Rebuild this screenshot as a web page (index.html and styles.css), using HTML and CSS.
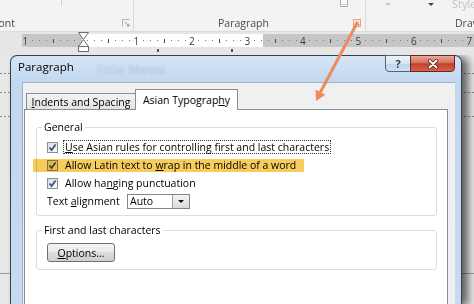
FILE: index.html
```html
<!DOCTYPE html>
<html lang="en">
<head>
    <meta charset="UTF-8">
    <meta name="viewport" content="width=device-width, initial-scale=1.0">
    <title>Paragraph - Asian Typography</title>
    <link rel="stylesheet" href="styles.css">
</head>
<body>
<div class="screen">
    <!-- ribbon strip, only the group labels are visible -->
    <div class="ribbon">
        <div class="group group-font">
            <div class="group-top"><span class="stub"></span></div>
            <div class="group-label">
                <span class="label-text">Font</span>
                <svg class="launcher" width="8" height="8" viewBox="0 0 8 8">
                    <path d="M0.5 7.5V0.5H7.5" fill="none" stroke="#b5b5b5"/>
                    <path d="M3 3L7 7M7 4.5V7H4.5" fill="none" stroke="#9a9a9a"/>
                </svg>
            </div>
        </div>
        <div class="group group-para">
            <div class="group-top">
                <svg class="mini-icon" width="8" height="7" viewBox="0 0 8 7">
                    <path d="M0.5 0V6.5H7.5V0" fill="#fafafa" stroke="#a8a8a8"/>
                    <path d="M2 4.5H6" stroke="#c4c4c4"/>
                </svg>
            </div>
            <div class="group-label">
                <span class="label-text">Paragraph</span>
                <svg class="launcher hot" width="8" height="8" viewBox="0 0 8 8">
                    <rect x="0.5" y="0.5" width="7" height="7" fill="#f7e2d6" stroke="#e9a284"/>
                    <path d="M3 3L6.5 6.5" stroke="#b56b4e"/>
                </svg>
            </div>
        </div>
        <div class="group group-styles">
            <div class="group-top">
                <span class="drop faded"></span>
                <span class="drop"></span>
                <span class="styles-word">Styles</span>
            </div>
            <div class="group-label"><span class="label-text">Drawing</span></div>
        </div>
    </div>

    <!-- horizontal ruler -->
    <div class="ruler-row">
        <div class="ruler">
            <span class="n">1</span><span></span><span></span><span></span><span class="t"></span><span></span><span></span><span></span>
            <span class="z"></span><span></span><span></span><span></span><span class="t"></span><span></span><span></span><span></span>
            <span class="n">1</span><span></span><span></span><span></span><span class="t"></span><span></span><span></span><span></span>
            <span class="n">2</span><span></span><span></span><span></span><span class="t"></span><span></span><span></span><span></span>
            <span class="n">3</span><span></span><span></span><span></span><span class="t"></span><span></span><span></span><span></span>
            <span class="n">4</span><span></span><span></span><span></span><span class="t"></span><span></span><span></span><span></span>
            <span class="n">5</span><span></span><span></span><span></span><span class="t"></span><span></span><span></span><span></span>
            <span class="n">6</span><span></span><span></span><span></span><span class="t"></span><span></span><span></span><span></span>
            <span class="n">7</span><span></span>
        </div>
        <svg class="indent-marker" width="11" height="21" viewBox="0 0 11 21">
            <path d="M0.5 0.5H10.5L5.5 7.5Z" fill="#fff" stroke="#6d6d6d"/>
            <path d="M5.5 7.5L10.5 14.5H0.5Z" fill="#fff" stroke="#6d6d6d"/>
            <rect x="0.5" y="14.5" width="10" height="5" fill="#fff" stroke="#6d6d6d"/>
        </svg>
        <span class="col-mark first"></span>
        <span class="col-mark second"></span>
    </div>

    <!-- document area with the dialog on top -->
    <div class="workspace">
        <div class="dialog">
            <div class="titlebar">
                <span class="title">Paragraph</span>
                <span class="ghost">Title Mews</span>
                <div class="caption">
                    <span class="cap-btn help">?</span>
                    <span class="cap-btn close">
                        <svg width="12" height="10" viewBox="0 0 12 10">
                            <path d="M2.5 1.5L9.5 8.5M9.5 1.5L2.5 8.5" stroke="#5a2218" stroke-width="3.4" stroke-linecap="round"/>
                            <path d="M2.5 1.5L9.5 8.5M9.5 1.5L2.5 8.5" stroke="#fff" stroke-width="1.8" stroke-linecap="round"/>
                        </svg>
                    </span>
                </div>
            </div>

            <div class="client">
                <div class="tabs">
                    <span class="tab"><u>I</u>ndents and Spacing</span>
                    <span class="tab active">Asian Typograp<u>h</u>y</span>
                </div>

                <div class="tab-panel">
                    <fieldset class="group-box">
                        <legend>General</legend>
                        <div class="row">
                            <span class="check"><svg width="9" height="9" viewBox="0 0 9 9"><path d="M1.5 4.5L3.6 7L7.6 1.5" fill="none" stroke="#3b4f86" stroke-width="1.7"/></svg></span>
                            <span class="caption-text focused"><u>U</u>se Asian rules for controlling first and last characters</span>
                        </div>
                        <div class="row marked">
                            <span class="check"><svg width="9" height="9" viewBox="0 0 9 9"><path d="M1.5 4.5L3.6 7L7.6 1.5" fill="none" stroke="#3b4f86" stroke-width="1.7"/></svg></span>
                            <span class="caption-text">Allow Latin text to <u>w</u>rap in the middle of a word</span>
                        </div>
                        <div class="row">
                            <span class="check"><svg width="9" height="9" viewBox="0 0 9 9"><path d="M1.5 4.5L3.6 7L7.6 1.5" fill="none" stroke="#3b4f86" stroke-width="1.7"/></svg></span>
                            <span class="caption-text">Allow ha<u>n</u>ging punctuation</span>
                        </div>
                        <div class="row">
                            <span class="field-label">Text <u>a</u>lignment</span>
                            <span class="combo">
                                <span class="combo-value">Auto</span>
                                <span class="combo-btn"></span>
                            </span>
                        </div>
                    </fieldset>

                    <fieldset class="group-box second">
                        <legend>First and last characters</legend>
                        <span class="push-btn"><u>O</u>ptions...</span>
                    </fieldset>
                </div>
            </div>
        </div>
    </div>

    <!-- annotation arrow pointing from the launcher to the dialog -->
    <svg class="pointer-arrow" width="474" height="304" viewBox="0 0 474 304">
        <path d="M357 23L320.5 92" stroke="#ee8a60" stroke-width="3" stroke-linecap="round"/>
        <path d="M316 101L315.6 89.6L325.4 94.8Z" fill="#ee8a60"/>
    </svg>
</div>
</body>
</html>
```

FILE: styles.css
```css
* {
    margin: 0;
    padding: 0;
    box-sizing: border-box;
}

body {
    width: 474px;
    height: 304px;
    overflow: hidden;
    background-color: #e7e7e7;
    font-family: "Open Sans", "Noto Sans", sans-serif;
    font-size: 10.5px;
    color: #000;
}

.screen {
    position: relative;
    width: 474px;
    height: 304px;
    display: flex;
    flex-direction: column;
    overflow: hidden;
}

/* ribbon */
.ribbon {
    display: flex;
    height: 32px;
    flex-shrink: 0;
    background-color: #f3f3f3;
    border-bottom: 1px solid #dcdcdc;
}

.group {
    flex-shrink: 0;
    display: flex;
    flex-direction: column;
    border-right: 1px solid #d9d9d9;
}

.group-font {
    width: 134px;
}

.group-para {
    width: 232px;
}

.group-styles {
    flex: 1;
    min-width: 0;
    overflow: hidden;
    border-right: none;
}

.group-top {
    height: 14px;
    display: flex;
    align-items: flex-start;
}

.group-label {
    height: 17px;
    display: flex;
    align-items: center;
    color: #4a4a4a;
    font-size: 10.5px;
    white-space: nowrap;
}

.group-font .label-text {
    flex: 1;
    margin-left: -7px;
}

.group-para .label-text {
    flex: 1;
    text-align: center;
}

.group-styles .group-label {
    padding-left: 89px;
}

.launcher {
    margin-right: 3px;
    flex-shrink: 0;
}

.launcher.hot {
    margin-right: 4px;
}

.stub {
    width: 1px;
    height: 6px;
    margin-left: 61px;
    background-color: #cfcfcf;
}

.mini-icon {
    margin-left: auto;
    margin-right: 17px;
}

.drop {
    flex-shrink: 0;
    width: 0;
    height: 0;
    margin-top: 3px;
    border-left: 3px solid transparent;
    border-right: 3px solid transparent;
    border-top: 3px solid #444;
}

.drop.faded {
    margin-left: 19px;
    border-top-color: #c8c8c8;
}

.group-styles .drop:not(.faded) {
    margin-left: 37px;
}

.styles-word {
    flex-shrink: 0;
    margin-left: 18px;
    margin-top: -4px;
    color: #c2c2c2;
    font-size: 11px;
    white-space: nowrap;
}

/* ruler */
.ruler-row {
    position: relative;
    height: 23px;
    flex-shrink: 0;
    padding: 2px 0 0 22px;
    background-color: #e6e6e6;
}

.ruler {
    height: 13px;
    display: flex;
    overflow: hidden;
    background: linear-gradient(to right, #c6c6c6 60px, #fff 60px, #fff 241px, #c6c6c6 241px);
}

.ruler span {
    flex: 0 0 6.94px;
    display: flex;
    align-items: center;
    justify-content: center;
    font-size: 10px;
    color: #3c3c3c;
}

.ruler span::before {
    content: "";
    width: 1px;
    height: 1px;
    background-color: #7a7a7a;
}

.ruler .n::before,
.ruler .z::before {
    display: none;
}

.ruler .t::before {
    height: 4px;
    background-color: #4a4a4a;
}

.indent-marker {
    position: absolute;
    left: 78px;
    top: 0;
}

.col-mark {
    position: absolute;
    top: 17px;
    width: 2px;
    height: 3px;
    background-color: #555;
}

.col-mark.first {
    left: 157px;
}

.col-mark.second {
    left: 231px;
}

/* document area, faint table gridlines show beside the dialog */
.workspace {
    flex: 1;
    display: flex;
    padding-left: 10px;
    background-color: #e8e8e8;
    background-image:
        repeating-linear-gradient(to right, #8a8a8a 0 2px, transparent 2px 4px),
        repeating-linear-gradient(to right, #8a8a8a 0 2px, transparent 2px 4px),
        repeating-linear-gradient(to right, #8a8a8a 0 2px, transparent 2px 4px),
        linear-gradient(#9a9a9a, #9a9a9a);
    background-size: 100% 1px;
    background-repeat: no-repeat;
    background-position: 0 18px, 0 37px, 0 61px, 0 218px;
}

/* dialog window */
.dialog {
    width: 452px;
    flex-shrink: 0;
    display: flex;
    flex-direction: column;
    border: 1px solid #34404e;
    border-bottom: none;
    border-radius: 7px 7px 0 0;
    background: linear-gradient(#d5e5f6, #c2d8ef 26px, #c6daf0);
    box-shadow: 6px 2px 9px rgba(0, 0, 0, 0.6);
}

.titlebar {
    height: 26px;
    display: flex;
    align-items: flex-start;
    padding: 0 6px 0 7px;
}

.title {
    margin-top: 3px;
    line-height: 16px;
    font-size: 11.5px;
}

.ghost {
    margin: 5px 0 0 22px;
    line-height: 16px;
    font-size: 13px;
    font-weight: bold;
    color: rgba(80, 110, 150, 0.16);
    filter: blur(1.4px);
}

.caption {
    margin-left: auto;
    margin-top: -1px;
    height: 17px;
    display: flex;
}

.cap-btn {
    height: 17px;
    display: flex;
    align-items: center;
    justify-content: center;
    border: 1px solid #52647b;
}

.help {
    width: 26px;
    border-radius: 0 0 0 4px;
    background: linear-gradient(#eef3f9, #d9e5f1 50%, #c3d3e6 50%, #d0e0f1);
    font-size: 11px;
    font-weight: bold;
    color: #2e3d52;
}

.close {
    width: 45px;
    margin-left: -1px;
    border-color: #5e2a22;
    border-radius: 0 0 4px 0;
    background: linear-gradient(#eaa898, #d1735f 45%, #c0412b 52%, #d6604a);
}

.client {
    flex: 1;
    display: flex;
    flex-direction: column;
    margin: 0 6px 0 11px;
    padding: 6px 7px 0 1px;
    background-color: #f0f0f0;
    border-top: 1px solid #9fb1c7;
    border-left: 1px solid #9fb1c7;
}

/* tabs */
.tabs {
    height: 20px;
    display: flex;
    align-items: flex-end;
    padding-left: 2px;
}

.tab {
    width: 110px;
    height: 16px;
    display: flex;
    align-items: center;
    justify-content: center;
    border: 1px solid #898c95;
    border-bottom: none;
    background: linear-gradient(#f3f3f3, #e3e3e3);
    white-space: nowrap;
}

.tab.active {
    position: relative;
    z-index: 1;
    width: 103px;
    height: 21px;
    margin-left: -1px;
    margin-bottom: -1px;
    background: #fff;
}

.tab-panel {
    flex: 1;
    padding: 10px 10px 0 11px;
    background-color: #fff;
    border: 1px solid #898c95;
    border-bottom: none;
}

/* group boxes */
.group-box {
    border: 1px solid #d7dfe5;
    border-radius: 3px;
    padding: 4px 10px 5px 10px;
}

.group-box legend {
    margin-left: -5px;
    padding: 0 2px;
    line-height: 14px;
}

.group-box.second {
    margin-top: 7px;
    padding-top: 6px;
    padding-bottom: 7px;
}

.row {
    position: relative;
    height: 18px;
    display: flex;
    align-items: center;
    white-space: nowrap;
}

.check {
    width: 11px;
    height: 11px;
    flex-shrink: 0;
    display: flex;
    align-items: center;
    justify-content: center;
    margin-right: 5px;
    border: 1px solid #8e8f8f;
    background: linear-gradient(135deg, #d9dde2, #f7f8f9);
}

.caption-text {
    padding: 0 1px;
    line-height: 12px;
    border: 1px dotted transparent;
}

.caption-text.focused {
    border-color: #333;
}

/* highlighter mark over the second option */
.row.marked::after {
    content: "";
    position: absolute;
    left: -14px;
    top: 3px;
    width: 271px;
    height: 13px;
    background-color: #f6cd5c;
    mix-blend-mode: multiply;
}

.field-label {
    width: 80px;
}

.combo {
    width: 63px;
    height: 15px;
    display: flex;
    align-items: center;
    border: 1px solid #7f858f;
    background-color: #fff;
}

.combo-value {
    flex: 1;
    padding-left: 2px;
}

.combo-btn {
    width: 17px;
    height: 13px;
    display: flex;
    align-items: center;
    justify-content: center;
    border-left: 1px solid #a0a0a0;
    background: linear-gradient(#f4f4f4, #d9d9d9);
}

.combo-btn::before {
    content: "";
    border-left: 3px solid transparent;
    border-right: 3px solid transparent;
    border-top: 3px solid #111;
}

.push-btn {
    width: 68px;
    height: 19px;
    display: flex;
    align-items: center;
    justify-content: center;
    border: 1px solid #707070;
    border-radius: 3px;
    background: linear-gradient(#f3f3f3, #ebebeb 45%, #dddddd 50%, #cfcfcf);
}

/* annotation */
.pointer-arrow {
    position: absolute;
    left: 0;
    top: 0;
    pointer-events: none;
}
```
